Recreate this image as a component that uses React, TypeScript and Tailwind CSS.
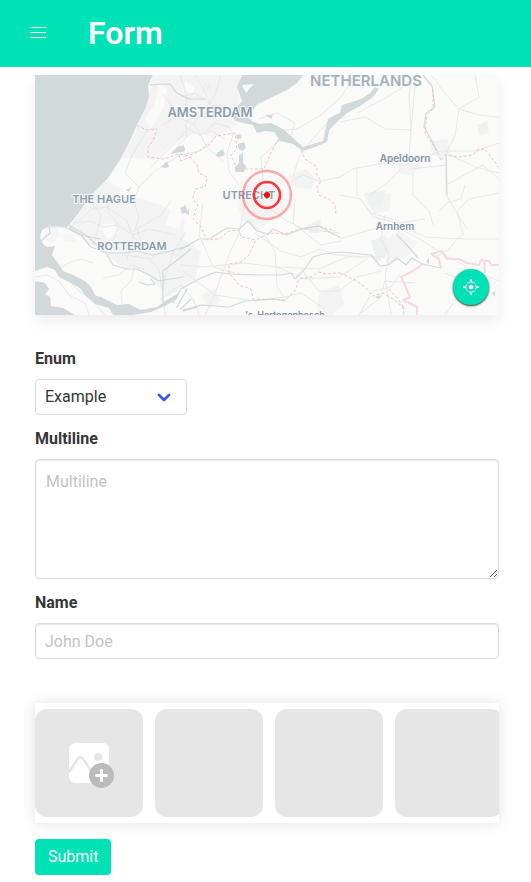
import { useState } from "react";

const WATER = "#d1d9db";

const urbanAreas = [
  "M118 0L205 0L204 30L196 40L202 50L180 62L162 58L140 66L120 85L88 82L104 50L114 22Z",
  "M50 128L70 118L98 122L126 130L150 146L148 164L166 176L160 205L132 222L112 196L84 190L60 172L34 154Z",
  "M206 112L226 104L248 114L250 134L228 152L208 146L202 128Z",
  "M254 102L270 94L282 104L276 114L260 112Z",
  "M362 90L378 82L386 92L376 100L364 98Z",
  "M396 66L412 64L416 76L406 84L396 78Z",
  "M348 166L364 156L382 168L372 182L352 190Z",
  "M284 218L304 210L310 230L296 240L282 236Z",
  "M338 120L356 118L354 136L340 138L332 128Z",
  "M52 112L70 106L88 114L82 122L60 124Z",
  "M166 220L180 214L186 226L174 234Z",
];

const minorRoads = [
  "M112 56L97 80L90 98L104 112L98 128",
  "M116 92L128 80L141 67L155 52L166 39L180 20L186 0",
  "M128 20L140 34L146 44L160 50L172 72L188 86",
  "M104 112L120 96L145 80L165 76L184 58",
  "M136 14L148 22L160 18L176 30L196 32",
  "M145 0L152 20L150 34L158 38",
  "M160 0L168 14L176 30",
  "M128 50L140 42L152 46L164 40L176 44L188 40",
  "M143 70L152 62L150 50L158 38L172 38",
  "M172 56L180 48L194 52L198 60L192 78L194 96L204 110",
  "M150 52L164 60L176 56L190 64",
  "M228 48L240 58L244 66L226 82L228 104L214 118",
  "M212 36L236 22L262 6L272 0",
  "M223 44L242 38L260 48L256 60L240 68",
  "M243 56L262 54L286 40L306 22L320 0",
  "M258 102L264 82L276 66L292 48L310 42",
  "M252 108L268 100L284 106L306 102",
  "M305 47L330 42L350 54L376 55L380 10",
  "M378 0L374 20L376 55L374 82",
  "M322 38L345 26L365 14L380 0",
  "M305 102L318 94L348 88L370 90L406 76L440 76L464 68",
  "M322 94L322 120L336 138L364 146",
  "M366 94L352 108L335 120",
  "M378 98L378 120L394 136L398 150",
  "M396 0L408 16L424 34L444 40L464 42",
  "M440 0L444 22L424 34",
  "M424 34L420 60L411 78L411 120L432 154",
  "M411 78L440 92L464 98",
  "M411 90L394 92L376 94",
  "M411 110L448 90L464 104",
  "M404 136L412 128L426 124L430 110",
  "M305 120L326 124L338 142L364 148L390 144",
  "M305 164L338 154L362 152L388 166L406 178L440 196L464 206",
  "M364 150L390 162L430 164L464 164",
  "M428 160L422 136L434 124L464 118",
  "M426 160L412 176L400 182",
  "M220 126L236 134L252 146L268 154L305 158",
  "M210 128L204 158L196 175L188 196L178 224L170 240",
  "M214 146L230 160L240 176L242 212L252 226",
  "M220 158L246 176L266 182L285 174L300 180L330 182",
  "M145 190L170 192L208 188L242 192L284 194L312 182L350 182",
  "M168 128L164 160L178 192L200 198",
  "M148 196L180 220L220 226L250 222L266 218L290 234",
  "M260 124L258 148L286 170L306 166",
  "M266 194L284 216L304 216L322 202L346 196",
  "M242 192L270 204L304 202L332 184",
  "M350 140L346 164L354 180L350 202L356 240",
  "M324 240L338 216L356 212L366 198",
  "M44 146L56 134L72 132L92 146L98 162L112 172L130 174",
  "M38 148L56 146L68 152L82 150L98 160L114 154L140 160",
  "M54 124L66 140L62 158L58 170",
  "M70 118L74 138L84 150L76 170",
  "M98 122L104 142L98 162L92 184",
  "M136 126L126 140L102 154L110 180L124 194L128 220",
  "M150 158L138 178L130 202L126 226",
  "M92 180L116 184L128 176L148 182",
  "M68 203L84 200L96 190L108 194L122 206",
  "M88 238L86 216L96 206L100 190",
  "M0 202L12 200L24 206L34 220L50 228L54 240",
  "M26 192L34 188L46 184L58 188",
  "M70 240L58 226L44 216L32 204",
  "M164 240L158 224L146 210L128 222L130 240",
  "M326 238L346 222L350 206L380 208",
  "M410 240L424 220L430 206L410 198",
];

const rivers = [
  "M114 10Q126 9 135 9L142 18L154 24L170 24",
  "M34 152L46 160L56 172L72 178L90 178L102 176L118 180L136 176L155 170",
  "M72 180L78 190L92 194L102 194L114 200L124 206L148 202",
  "M128 228L128 196L146 182L156 174",
  "M145 175L164 164L174 164L192 153L204 154L213 146L222 156L233 159L238 154L252 160L266 154L284 151L296 158L305 162",
  "M138 228L146 214L164 204L180 197L196 199L222 200L246 200L256 198L260 204L270 194L278 182L288 179L305 177L336 180L345 191L353 190L362 183L371 190L377 183L387 189L406 193",
  "M362 160L369 167L378 177L383 183",
  "M388 0L397 11L400 32L391 38L389 52L398 68L402 76",
  "M411 80L412 120",
  "M34 150L52 161L64 172",
  "M5 167L15 158L14 152L30 152L45 160L65 164",
  "M65 222L78 230L84 239",
  "M104 207L112 210L120 209L116 204",
  "M148 235L166 230L194 232L210 226L240 224L250 226",
];

const borders = [
  "M102 50L111 55L122 54L118 66L113 72L113 82L129 84L144 79L153 81L160 78L174 70L181 61L200 58L202 74L196 80L202 94L214 94L229 94L235 80L242 66L250 62",
  "M266 75L270 84L282 92L282 100L286 106L282 112L284 120L294 124L300 130L301 140",
  "M144 80L146 86L158 81",
  "M155 82L162 90L164 98L172 102L170 112L160 114L158 124L163 130L160 136L158 144L166 152L172 165L184 164L194 156L204 155L206 162L221 165L214 180L206 187L194 189L194 198L204 210L216 214L218 224L250 225L260 216L264 204L276 202L284 197L292 199L305 198",
  "M222 164L236 158L250 159L266 154L284 151L300 156",
  "M398 14L398 34L392 40L390 58L402 76L406 86L410 80L424 82L438 80L442 75L450 74L456 82L464 92",
  "M305 198L320 205L330 212L338 221L348 218L358 224L368 232L369 240",
  "M354 214L363 224L370 234",
];

const nationalBorder =
  "M388 189L378 196L366 202L370 210L375 222L368 225L374 228L382 232L382 240M396 179L407 176L412 184L424 184L432 188L444 190L446 185L454 186L456 190L464 190M396 179L404 184L406 193M449 186L450 198";

const lakes = [
  "M135 79L142 72L149 70L150 76L141 78Z",
  "M126 92L132 86L134 92L130 93Z",
  "M182 78L188 74L190 80L185 82L181 81Z",
  "M203 69L209 67L211 73L207 76L203 73Z",
  "M204 80L208 78L208 88L211 91L209 97L200 97L200 92L204 88Z",
  "M201 60L205 59L207 63L202 64Z",
  "M145 71L150 73L148 77L145 77Z",
  "M145 133L151 130L152 137L147 139Z",
  "M150 138L154 134L154 140Z",
  "M230 40L238 40L236 44Z",
  "M91 115L97 112L94 117Z",
  "M391 186L394 183L394 189Z",
  "M340 222L346 220L344 224Z",
  "M457 218L460 216L460 222Z",
];

type City = { name: string; x: number; y: number; size: number; color: string };

const cities: City[] = [
  { name: "NETHERLANDS", x: 331, y: 11, size: 15, color: "#a6b2be" },
  { name: "AMSTERDAM", x: 175, y: 42, size: 13, color: "#8c9cab" },
  { name: "THE HAGUE", x: 69, y: 128, size: 11, color: "#8c9cab" },
  { name: "UTRECHT", x: 214, y: 124, size: 11, color: "#8c9cab" },
  { name: "ROTTERDAM", x: 97, y: 175, size: 11, color: "#8c9cab" },
  { name: "Apeldoorn", x: 370, y: 87, size: 10, color: "#8293a5" },
  { name: "Arnhem", x: 360, y: 155, size: 10, color: "#8293a5" },
  { name: "'s-Hertogenbosch", x: 250, y: 243, size: 9, color: "#8293a5" },
];

function MapDrawing() {
  return (
    <svg
      className="block h-full w-full"
      viewBox="0 0 464 240"
      preserveAspectRatio="xMidYMid slice"
      role="img"
      aria-label="Map of the Netherlands"
    >
      <rect width="464" height="240" fill="#fafaf9" />
      <g fill="#f2f3f2">
        {urbanAreas.map((d) => (
          <path key={d} d={d} />
        ))}
      </g>
      <g fill="#fafaf9">
        <path d="M124 8L132 14L128 34L116 54L110 44L120 28Z" />
        <path d="M64 150L78 148L84 158L72 164Z" />
        <path d="M136 132L148 140L144 154L130 150Z" />
        <path d="M150 6L160 12L158 18L150 16Z" />
      </g>
      <g fill="#eef1ef">
        <path d="M442 50L452 46L454 58L444 60Z" />
        <path d="M328 118L350 116L346 130L336 132Z" />
        <path d="M336 166L350 160L356 176L342 188Z" />
        <path d="M168 8L176 8L176 16L168 18Z" />
        <path d="M272 150L286 144L284 158L274 158Z" />
      </g>
      <g fill="none" stroke="#e6e8e8" strokeWidth="1" strokeLinejoin="round">
        {minorRoads.map((d) => (
          <path key={d} d={d} />
        ))}
      </g>
      <g fill={WATER}>
        <path d="M0 0L118 0L113 10L114 22L110 34L102 50L94 68L85 85L73 103L58 118L47 133L39 144L32 152L22 151L15 151L7 155L5 162L8 169L12 172L20 171L17 180L23 188L28 196L38 200L50 206L56 212L60 220L74 226L82 230L94 229L106 235L122 232L130 226L144 218L142 224L130 231L116 237L98 240L78 240L74 233L60 229L50 220L45 213L34 207L24 202L20 195L12 192L0 196Z" />
        <path d="M0 206L10 208L14 214L10 219L15 222L16 231L28 233L40 240L0 240Z" />
        <path d="M207 0L268 0L262 8L252 15L235 23L222 29L218 36L210 40L217 46L224 49L236 48L248 54L257 62L268 72L288 66L291 52L293 44L300 40L305 38L307 30L317 27L326 24L335 18L340 12L344 14L338 22L325 31L312 38L306 43L300 49L294 55L292 67L280 72L268 76L258 69L245 66L240 57L230 56L222 58L218 50L208 48L200 46L198 41L200 34L207 26L202 12Z" />
        {lakes.map((d) => (
          <path key={d} d={d} />
        ))}
      </g>
      <path d="M207 10L219 9L215 13L211 18Z" fill="#fafaf9" />
      <g fill="#f4f5f4">
        <path d="M11 153L22 153L25 160L18 168L13 167L9 161Z" />
        <path d="M28 158L38 160L42 168L30 166Z" />
      </g>
      <g fill="none" stroke={WATER} strokeLinejoin="round" strokeLinecap="round">
        {rivers.map((d) => (
          <path key={d} d={d} strokeWidth="1.2" />
        ))}
        <path d="M142 232L152 214M146 234L156 224M148 236L162 232" strokeWidth="1.4" />
      </g>
      <g fill="none" stroke="#f0c3c8" strokeWidth="1" strokeDasharray="3 2">
        {borders.map((d) => (
          <path key={d} d={d} />
        ))}
      </g>
      <path d={nationalBorder} fill="none" stroke="#f5dade" strokeWidth="2" strokeLinejoin="round" />
      <g textAnchor="middle" stroke="#f8f9f9" strokeWidth="2" strokeLinejoin="round" paintOrder="stroke">
        {cities.map((city) => (
          <text
            key={city.name}
            x={city.x}
            y={city.y}
            fontSize={city.size}
            fill={city.color}
            className="font-['Inter',sans-serif] font-semibold"
          >
            {city.name}
          </text>
        ))}
      </g>
      <g fill="none">
        <circle cx="232" cy="120" r="24" stroke="#ff3b3f" strokeOpacity="0.42" strokeWidth="2.5" />
        <circle cx="232" cy="120" r="13" stroke="#f9393e" strokeWidth="2.6" />
        <circle cx="232" cy="120" r="3" fill="#f00" />
      </g>
    </svg>
  );
}

function LocateIcon() {
  return (
    <svg className="h-[18px] w-[18px]" viewBox="0 0 18 18" fill="none" aria-hidden="true">
      <circle cx="9" cy="9" r="5.2" stroke="white" strokeWidth="1" />
      <circle cx="9" cy="9" r="2.3" fill="white" />
      <path d="M9 1V4M9 14V17M1 9H4M14 9H17" stroke="white" strokeWidth="1.6" />
    </svg>
  );
}

function AddImageIcon() {
  return (
    <svg className="h-[46px] w-[46px]" viewBox="0 0 46 46" aria-hidden="true">
      <rect width="40" height="40" rx="6" fill="white" />
      <path d="M0 29L8 17Q11.5 11 15 17L24 31" fill="none" stroke="#e6e6e6" strokeWidth="2.6" />
      <circle cx="29" cy="14" r="4" fill="#e6e6e6" />
      <circle cx="32.5" cy="32.5" r="12.5" fill="#bbb" />
      <path d="M32.5 27.5V37.5M27.5 32.5H37.5" stroke="white" strokeWidth="3" strokeLinecap="round" />
    </svg>
  );
}

const labelStyle = "mb-2 block text-base leading-6 font-bold text-[#363636]";
const fieldStyle =
  "block w-full rounded border border-[#dbdbdb] bg-white text-base leading-6 text-[#363636] shadow-[inset_0_1px_2px_rgba(10,10,10,0.1)] outline-none placeholder:text-[#c3c3c3] focus:border-[#00e1b5]";

export default function App() {
  const [option, setOption] = useState("Example");
  const [multiline, setMultiline] = useState("");
  const [name, setName] = useState("");

  return (
    <div className="bg-white pb-2 font-['Roboto',sans-serif] text-[#363636]">
      <header className="flex h-[67px] items-center bg-[#00e1b5] pb-[2px] pl-[30px] text-white">
        <button type="button" aria-label="Open menu" className="flex w-4 flex-col gap-1">
          <span className="h-px w-full bg-white" />
          <span className="h-px w-full bg-white" />
          <span className="h-px w-full bg-white" />
        </button>
        <h1 className="ml-[42px] text-[32px] leading-9 font-semibold">Form</h1>
      </header>

      <main className="pt-2 pr-8 pl-[35px]">
        <section className="relative h-60 shadow-[0_6px_14px_rgba(10,10,10,0.08)]">
          <MapDrawing />
          <button
            type="button"
            aria-label="Use my location"
            className="absolute right-[10px] bottom-[10px] flex h-9 w-9 items-center justify-center rounded-full bg-[#00e1b5] shadow-[0_1px_2px_rgba(0,0,0,0.8)]"
          >
            <LocateIcon />
          </button>
        </section>

        <form className="mt-8" onSubmit={(event) => event.preventDefault()}>
          <div className="mb-3">
            <label htmlFor="enum" className={labelStyle}>
              Enum
            </label>
            <div className="relative w-[152px]">
              <select
                id="enum"
                value={option}
                onChange={(event) => setOption(event.target.value)}
                className="block h-9 w-full appearance-none rounded border border-[#dbdbdb] bg-white pr-10 pl-[9px] text-base leading-6 text-[#363636] outline-none"
              >
                <option>Example</option>
              </select>
              <svg
                className="pointer-events-none absolute top-[14px] right-4 h-[9px] w-[14px]"
                viewBox="0 0 14 9"
                fill="none"
                aria-hidden="true"
              >
                <path d="M2 2L7 7L12 2" stroke="#3b5bdb" strokeWidth="2.8" strokeLinecap="round" strokeLinejoin="round" />
              </svg>
            </div>
          </div>

          <div className="mb-3">
            <label htmlFor="multiline" className={labelStyle}>
              Multiline
            </label>
            <textarea
              id="multiline"
              placeholder="Multiline"
              value={multiline}
              onChange={(event) => setMultiline(event.target.value)}
              className={`${fieldStyle} h-[120px] resize-y p-[10px]`}
            />
          </div>

          <div>
            <label htmlFor="name" className={labelStyle}>
              Name
            </label>
            <input
              id="name"
              type="text"
              placeholder="John Doe"
              value={name}
              onChange={(event) => setName(event.target.value)}
              className={`${fieldStyle} h-9 px-[9px]`}
            />
          </div>

          <div className="mt-11 flex gap-3 overflow-hidden bg-white py-[6px] shadow-[0_0_14px_rgba(10,10,10,0.12)]">
            <button
              type="button"
              aria-label="Add image"
              className="flex h-[108px] w-[108px] shrink-0 items-center justify-center rounded-xl bg-[#e6e6e6] pt-[6px] pl-[6px]"
            >
              <AddImageIcon />
            </button>
            <div className="h-[108px] w-[108px] shrink-0 rounded-xl bg-[#e6e6e6]" />
            <div className="h-[108px] w-[108px] shrink-0 rounded-xl bg-[#e6e6e6]" />
            <div className="h-[108px] w-[108px] shrink-0 rounded-xl bg-[#e6e6e6]" />
          </div>

          <button
            type="submit"
            className="mt-4 h-9 rounded bg-[#00e1b5] px-[13px] text-base leading-6 text-white"
          >
            Submit
          </button>
        </form>
      </main>
    </div>
  );
}
